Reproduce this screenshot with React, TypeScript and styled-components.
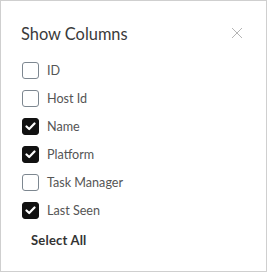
import React from "react";
import styled, { createGlobalStyle } from "styled-components";

const Global = createGlobalStyle`
  html, body { margin: 0; padding: 0; background: #fff; }
  body { font-family: "Lato", "Noto Sans", sans-serif; }
`;

const Panel = styled.div`
  box-sizing: border-box;
  width: 267px;
  height: 272px;
  border: 1px solid #cfcfcf;
  background: #fff;
  padding: 20px 0 0 21px;
  display: flex;
  flex-direction: column;
`;

const Header = styled.div`
  display: flex;
  align-items: center;
  justify-content: space-between;
  padding-right: 23px;
  height: 24px;
  margin-bottom: 17px;
`;

const Title = styled.h2`
  margin: 0 0 0 -1px;
  font-size: 16.4px;
  font-weight: 400;
  color: #3a3a3a;
`;

const Close = styled.button`
  border: 0;
  background: none;
  padding: 0;
  width: 12px;
  height: 12px;
  display: flex;
  cursor: pointer;
`;

const List = styled.div`
  display: flex;
  flex-direction: column;
  gap: 11px;
`;

const Row = styled.label`
  display: flex;
  align-items: center;
  gap: 8px;
  height: 17px;
  font-size: 12.6px;
  color: #555;
  cursor: pointer;
`;

const Box = styled.span<{ $checked: boolean }>`
  box-sizing: border-box;
  width: 17px;
  height: 17px;
  border-radius: 3px;
  border: 1.5px solid ${(p) => (p.$checked ? "#111" : "#7d8790")};
  background: ${(p) => (p.$checked ? "#111" : "#fff")};
  display: flex;
  align-items: center;
  justify-content: center;
`;

const SelectAll = styled.button`
  align-self: flex-start;
  margin: 13px 0 0 9px;
  padding: 0;
  border: 0;
  background: none;
  font-family: inherit;
  font-size: 13px;
  font-weight: 700;
  letter-spacing: 0.2px;
  color: #333;
  cursor: pointer;
`;

const columns: { name: string; checked: boolean }[] = [
  { name: "ID", checked: false },
  { name: "Host Id", checked: false },
  { name: "Name", checked: true },
  { name: "Platform", checked: true },
  { name: "Task Manager", checked: false },
  { name: "Last Seen", checked: true },
];

export default function App() {
  return (
    <>
      <Global />
      <Panel>
        <Header>
          <Title>Show Columns</Title>
          <Close aria-label="close">
            <svg width="12" height="12" viewBox="0 0 12 12">
              <path d="M1 1L11 11M11 1L1 11" stroke="#b5b5b5" strokeWidth="1" />
            </svg>
          </Close>
        </Header>
        <List>
          {columns.map((c) => (
            <Row key={c.name}>
              <Box $checked={c.checked}>
                {c.checked && (
                  <svg width="11" height="9" viewBox="0 0 11 9">
                    <path d="M1.5 4.5L4.2 7L9.5 1.5" stroke="#fff" strokeWidth="2.2" fill="none" strokeLinecap="round" strokeLinejoin="round" />
                  </svg>
                )}
              </Box>
              {c.name}
            </Row>
          ))}
        </List>
        <SelectAll>Select All</SelectAll>
      </Panel>
    </>
  );
}
